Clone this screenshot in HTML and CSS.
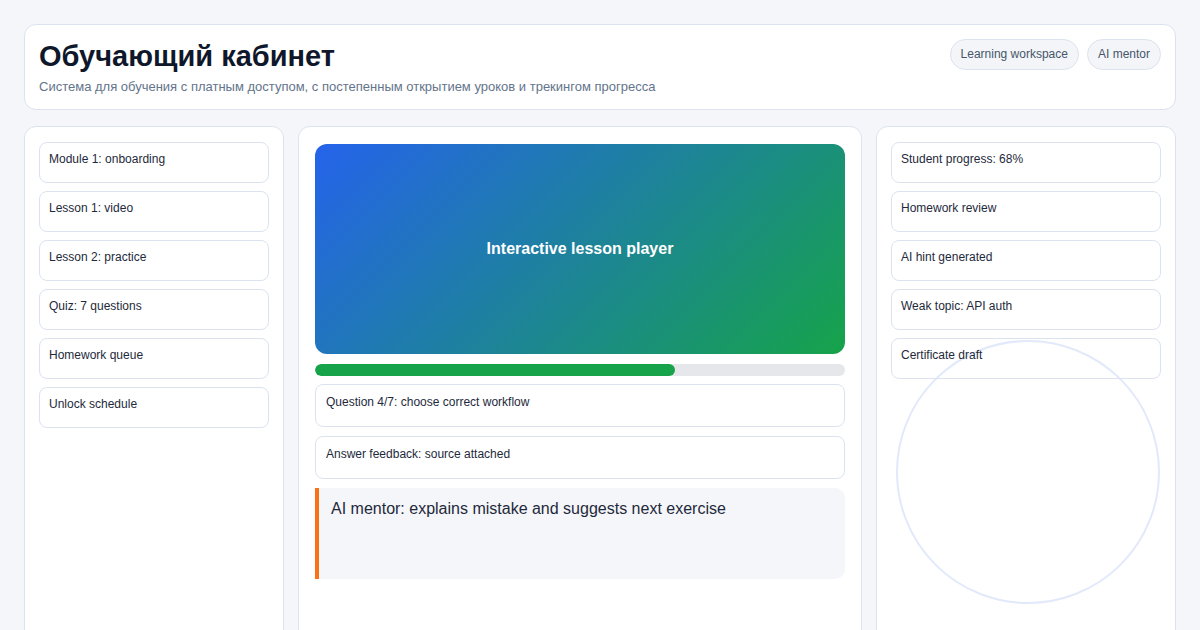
FILE: index.html
```html
<!DOCTYPE html>
<html lang="ru">
<head>
<meta charset="utf-8">
<title>Обучающий кабинет</title>
<link rel="stylesheet" href="styles.css">
</head>
<body>
<div class="page">
  <header class="header">
    <div class="header-text">
      <h1 class="title">Обучающий кабинет</h1>
      <p class="subtitle">Система для обучения с платным доступом, с постепенным открытием уроков и трекингом прогресса</p>
    </div>
    <div class="pills">
      <span class="pill">Learning workspace</span>
      <span class="pill">AI mentor</span>
    </div>
  </header>
  <main class="columns">
    <section class="col col-side">
      <div class="item">Module 1: onboarding</div>
      <div class="item">Lesson 1: video</div>
      <div class="item">Lesson 2: practice</div>
      <div class="item">Quiz: 7 questions</div>
      <div class="item">Homework queue</div>
      <div class="item">Unlock schedule</div>
    </section>
    <section class="col col-center">
      <div class="player">Interactive lesson player</div>
      <div class="progress"><div class="progress-fill" style="width:68%"></div></div>
      <div class="qitem">Question 4/7: choose correct workflow</div>
      <div class="qitem">Answer feedback: source attached</div>
      <div class="mentor">AI mentor: explains mistake and suggests next exercise</div>
    </section>
    <section class="col col-side col-right">
      <div class="ring"></div>
      <div class="item">Student progress: 68%</div>
      <div class="item">Homework review</div>
      <div class="item">AI hint generated</div>
      <div class="item">Weak topic: API auth</div>
      <div class="item">Certificate draft</div>
    </section>
  </main>
</div>
</body>
</html>
```

FILE: styles.css
```css
* { box-sizing: border-box; }
html, body { margin: 0; padding: 0; }
body {
  background: #f5f6fa;
  font-family: "Liberation Sans", Arial, sans-serif;
  color: #1e293b;
  width: 1200px;
  height: 630px;
  overflow: hidden;
}
.page {
  padding: 24px;
  display: flex;
  flex-direction: column;
  gap: 16px;
}
.header {
  background: #fff;
  border: 1px solid #dbe3ee;
  border-radius: 12px;
  padding: 14px;
  display: flex;
  justify-content: space-between;
  align-items: flex-start;
  height: 86px;
}
.title {
  margin: 0;
  font-size: 29px;
  line-height: 34px;
  font-weight: 700;
  color: #0f172a;
}
.subtitle {
  margin: 6px 0 0;
  font-size: 13px;
  line-height: 16px;
  color: #64748b;
}
.pills { display: flex; gap: 8px; }
.pill {
  font-size: 12px;
  line-height: 15px;
  padding: 7px 10px;
  border: 1px solid #dbe3ee;
  border-radius: 999px;
  background: #f3f5f9;
  color: #475569;
}
.columns {
  display: grid;
  grid-template-columns: 260px 564px 300px;
  gap: 14px;
  height: 520px;
}
.col {
  background: #fff;
  border: 1px solid #dbe3ee;
  border-radius: 12px;
  display: flex;
  flex-direction: column;
}
.col-side {
  padding: 15px 14px;
  gap: 8px;
}
.col-right { position: relative; overflow: hidden; }
.item {
  position: relative;
  z-index: 1;
  height: 41px;
  padding: 9px 9px;
  border: 1px solid #dbe3ee;
  border-radius: 8px;
  font-size: 12px;
  line-height: 15px;
}
.ring {
  position: absolute;
  z-index: 0;
  left: 19px;
  top: 213px;
  width: 264px;
  height: 264px;
  border: 2px solid #e2e9fa;
  border-radius: 50%;
  pointer-events: none;
}
.col-center {
  padding: 17px 16px;
}
.player {
  height: 210px;
  border-radius: 12px;
  background: linear-gradient(135deg, #2563eb 0%, #16a34a 100%);
  color: #fff;
  font-weight: 700;
  font-size: 16px;
  display: flex;
  align-items: center;
  justify-content: center;
}
.progress {
  margin-top: 10px;
  height: 12px;
  border-radius: 999px;
  background: #e5e7eb;
  overflow: hidden;
}
.progress-fill {
  height: 100%;
  background: #16a34a;
  border-radius: 999px;
}
.qitem {
  margin-top: 8px;
  height: 43px;
  padding: 10px 10px;
  border: 1px solid #dbe3ee;
  border-radius: 8px;
  font-size: 12px;
  line-height: 15px;
}
.qitem + .qitem { margin-top: 9px; }
.mentor {
  margin-top: 9px;
  height: 91px;
  background: #f5f6fa;
  border-left: 4px solid #f97316;
  border-radius: 0 10px 10px 0;
  padding: 11px 12px 10px;
  font-size: 16px;
  line-height: 20px;
  color: #1e293b;
}
```
